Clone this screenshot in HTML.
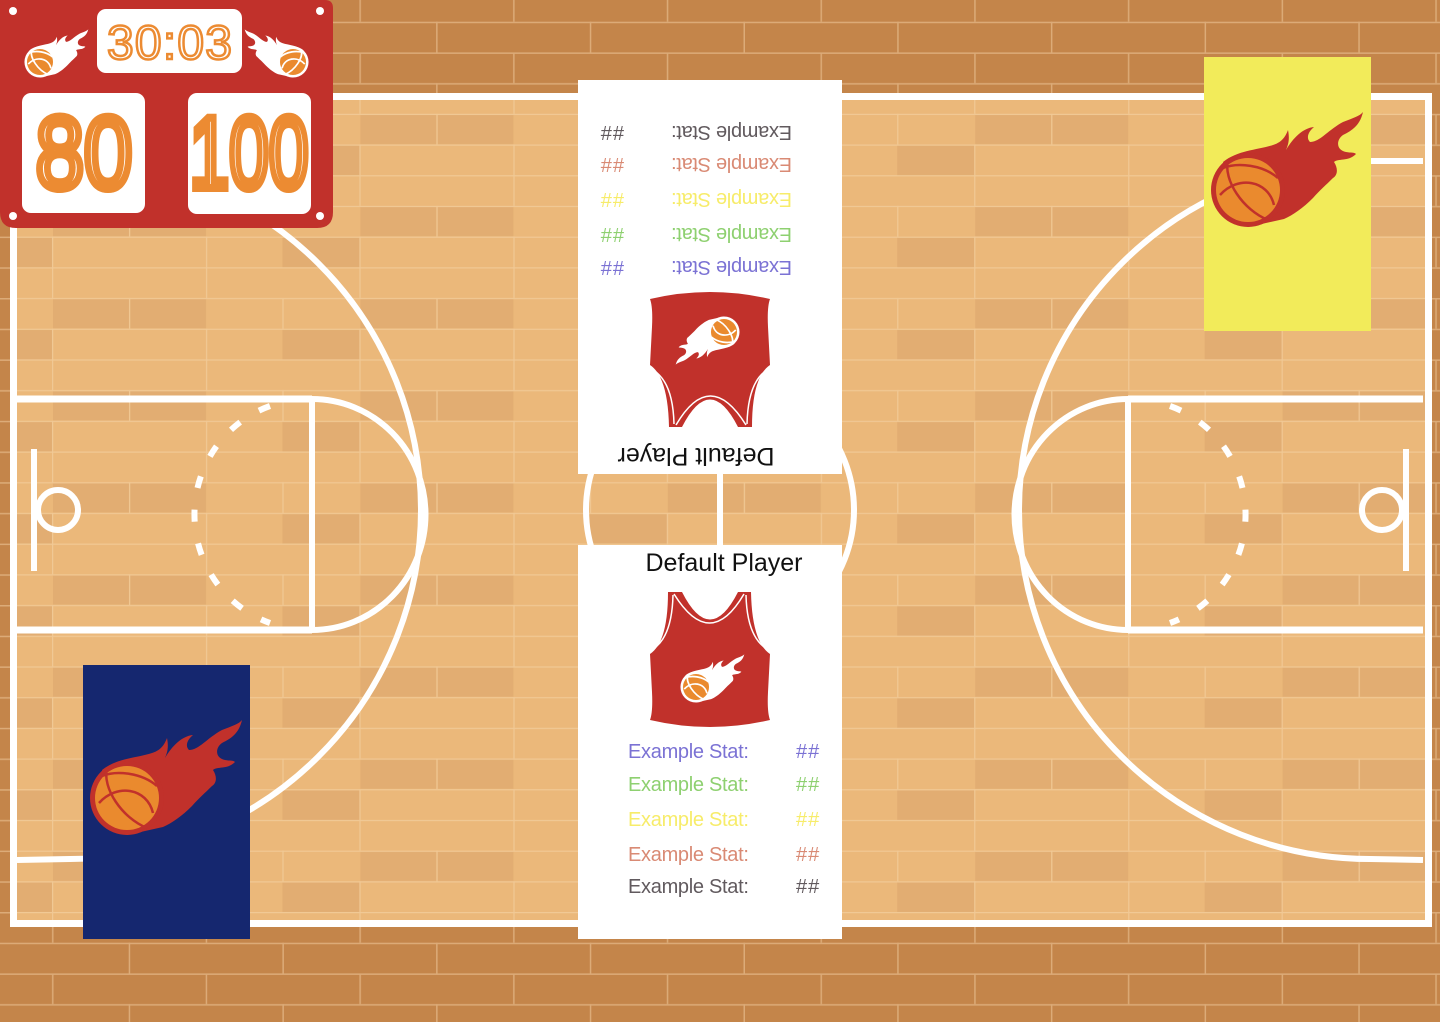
<!DOCTYPE html>
<html><head><meta charset="utf-8"><style>
html,body{margin:0;padding:0;width:1440px;height:1036px;overflow:hidden;background:#fff}
.abs{position:absolute}
.card{position:absolute;left:578px;width:264px;height:394px;background:#fff;font-family:"Liberation Sans",sans-serif}
.card .name{position:absolute;left:0;width:292px;text-align:center;top:4px;font-size:25px;color:#111}
.card .row{position:absolute;left:50px;font-size:20px;letter-spacing:-0.3px}
.card .num{position:absolute;left:218px;font-size:20px;letter-spacing:1px}
</style></head><body>
<svg class="abs" style="left:0;top:0" width="1440" height="1036" viewBox="0 0 1440 1036">
<defs>
<pattern id="dark" width="153.7" height="61.4" patternUnits="userSpaceOnUse" x="-25" y="-9">
<rect width="153.7" height="61.4" fill="#c4854a"/>
<rect y="0" width="153.7" height="1.5" fill="#dcab78"/>
<rect y="30.7" width="153.7" height="1.5" fill="#dcab78"/>
<rect x="77" y="0" width="1.5" height="30.7" fill="#dcab78"/>
<rect x="0" y="30.7" width="1.5" height="30.7" fill="#dcab78"/>
</pattern>
<pattern id="light" width="307.4" height="92.1" patternUnits="userSpaceOnUse" x="-25" y="-9">
<rect width="307.4" height="92.1" fill="#ebb87a"/>
<rect x="78" y="31" width="153" height="30" fill="#e2ad72"/>
<rect x="0" y="62" width="77" height="30" fill="#e2ad72"/>
<rect y="0" width="307.4" height="1.2" fill="#f1c995"/>
<rect y="30.7" width="307.4" height="1.2" fill="#f1c995"/>
<rect y="61.4" width="307.4" height="1.2" fill="#f1c995"/>
<rect x="77" y="0" width="1.2" height="30.7" fill="#f1c995"/>
<rect x="231" y="0" width="1.2" height="30.7" fill="#f1c995"/>
<rect x="0" y="30.7" width="1.2" height="30.7" fill="#f1c995"/>
<rect x="154" y="30.7" width="1.2" height="30.7" fill="#f1c995"/>
<rect x="77" y="61.4" width="1.2" height="30.7" fill="#f1c995"/>
<rect x="231" y="61.4" width="1.2" height="30.7" fill="#f1c995"/>
</pattern>
<g id="flame">
<path d="M -25,-28 C -10,-40 10,-40 25,-45 C 35,-48 38,-55 40,-60 C 42,-50 40,-45 38,-40 C 45,-52 55,-62 66,-63 C 60,-58 58,-52 62,-48 C 72,-48 80,-60 95,-68 C 105,-72 112,-74 115,-78 C 112,-65 105,-60 95,-55 C 88,-50 88,-40 98,-38 C 103,-37 106,-38 108,-36 C 100,-28 90,-32 86,-28 C 90,-22 90,-15 85,-12 C 78,-5 72,0 65,8 C 55,18 45,25 36,29 L 0,37 Z"/>
<circle r="37"/>
</g>
<g id="half">
<line x1="17" y1="399" x2="312" y2="399" stroke="#fff" stroke-width="7"/>
<line x1="17" y1="630" x2="312" y2="630" stroke="#fff" stroke-width="7"/>
<line x1="312" y1="399" x2="312" y2="630" stroke="#fff" stroke-width="6"/>
<path d="M312,399 A113,115 0 0 1 312,630" fill="none" stroke="#fff" stroke-width="6"/>
<path d="M270,406 A113,115 0 0 0 270,623" fill="none" stroke="#fff" stroke-width="6" stroke-dasharray="12,22"/>
<line x1="34" y1="449" x2="34" y2="571" stroke="#fff" stroke-width="6"/>
<circle cx="58" cy="510" r="20" fill="none" stroke="#fff" stroke-width="6"/>
<path d="M17,161 L70,161 A351,349 0 0 1 70,859 L17,860" fill="none" stroke="#fff" stroke-width="6"/>
</g>
</defs>
<rect width="1440" height="1022" fill="url(#dark)"/>
<rect x="10" y="93" width="1422" height="834" fill="url(#light)"/>
<rect x="13.5" y="96.5" width="1415" height="827" fill="none" stroke="#fff" stroke-width="7"/>
<use href="#half"/>
<use href="#half" transform="translate(1440,0) scale(-1,1)"/>
<line x1="720" y1="100" x2="720" y2="920" stroke="#fff" stroke-width="6"/>
<circle cx="720" cy="510" r="134" fill="none" stroke="#fff" stroke-width="6"/>

<rect x="1204" y="57" width="167" height="274" fill="#f2eb5a"/>
<g transform="translate(1248,190)"><use href="#flame" fill="#c1312b"/><circle r="32" fill="#ea8a2e"/>
<path d="M-25,-22 C-10,-28 15,-25 30,-12 M-28,5 C-10,-15 20,-10 26,15 M-20,-30 C-25,-10 -5,20 20,30 M-18,-30 L-10,-34" fill="none" stroke="#c1312b" stroke-width="2.5"/></g>
<rect x="83" y="665" width="167" height="274" fill="#15276f"/>
<g transform="translate(127,798)"><use href="#flame" fill="#c1312b"/><circle r="32" fill="#ea8a2e"/>
<path d="M-25,-22 C-10,-28 15,-25 30,-12 M-28,5 C-10,-15 20,-10 26,15 M-20,-30 C-25,-10 -5,20 20,30 M-18,-30 L-10,-34" fill="none" stroke="#c1312b" stroke-width="2.5"/></g>

<path d="M0,0 H325 Q333,0 333,8 V212 Q333,228 317,228 H16 Q0,228 0,212 Z" fill="#c1312b"/>
<circle cx="13" cy="11" r="4" fill="#fff"/><circle cx="320" cy="11" r="4" fill="#fff"/>
<circle cx="13" cy="216" r="4" fill="#fff"/><circle cx="320" cy="216" r="4" fill="#fff"/>
<rect x="97" y="9" width="145" height="64" rx="9" fill="#fff"/>
<rect x="22" y="93" width="123" height="120" rx="9" fill="#fff"/>
<rect x="188" y="93" width="123" height="121" rx="9" fill="#fff"/>
<g transform="translate(40,62) scale(0.42)"><use href="#flame" fill="#fff"/><circle r="31" fill="#ea8a2e"/>
<path d="M-25,-22 C-10,-28 15,-25 30,-12 M-28,5 C-10,-15 20,-10 26,15 M-20,-30 C-25,-10 -5,20 20,30" fill="none" stroke="#fff" stroke-width="4"/></g>
<g transform="translate(293,62) scale(-0.42,0.42)"><use href="#flame" fill="#fff"/><circle r="31" fill="#ea8a2e"/>
<path d="M-25,-22 C-10,-28 15,-25 30,-12 M-28,5 C-10,-15 20,-10 26,15 M-20,-30 C-25,-10 -5,20 20,30" fill="none" stroke="#fff" stroke-width="4"/></g>
<text x="107" y="59" font-family="Liberation Sans, sans-serif" font-size="48" fill="none" stroke="#ec8b32" stroke-width="2.5" textLength="125" lengthAdjust="spacing">30:03</text>
<text x="84" y="188" text-anchor="middle" font-family="Liberation Sans, sans-serif" font-size="102" fill="none" stroke="#ec8b32" stroke-width="8" transform="translate(84,0) scale(0.85,1) translate(-84,0)">80</text>
<text x="249" y="188" text-anchor="middle" font-family="Liberation Sans, sans-serif" font-size="102" fill="none" stroke="#ec8b32" stroke-width="8" transform="translate(249,0) scale(0.7,1) translate(-249,0)">100</text>
</svg>

<div class="card" style="top:545px">
<div class="name">Default Player</div>
<svg class="abs" style="left:72px;top:47px" width="120" height="140" viewBox="0 0 120 140">
<path d="M18,0 L32,0 Q60,55 88,0 L101,0 Q102,50 120,62 L118,100 Q117,120 120,128 Q60,142 0,128 Q3,120 2,100 L0,62 Q18,50 18,0Z" fill="#c1312b"/>
<path d="M24,2 Q60,60 94,2 M3,57 Q22,45 23,3 M117,57 Q97,45 96,3" fill="none" stroke="#fff" stroke-width="1.5"/>
<g transform="translate(46,95) scale(0.42)"><use href="#flame" fill="#fff"/><circle r="31" fill="#ea8a2e"/>
<path d="M-25,-22 C-10,-28 15,-25 30,-12 M-28,5 C-10,-15 20,-10 26,15 M-20,-30 C-25,-10 -5,20 20,30" fill="none" stroke="#fff" stroke-width="4"/></g>
</svg>
<div class="row" style="top:196px;color:#7b72d4">Example Stat:</div><div class="num" style="top:196px;color:#7b72d4">##</div>
<div class="row" style="top:229px;color:#8ed070">Example Stat:</div><div class="num" style="top:229px;color:#8ed070">##</div>
<div class="row" style="top:264px;color:#f7ec6a">Example Stat:</div><div class="num" style="top:264px;color:#f7ec6a">##</div>
<div class="row" style="top:299px;color:#d98a74">Example Stat:</div><div class="num" style="top:299px;color:#d98a74">##</div>
<div class="row" style="top:331px;color:#615a5e">Example Stat:</div><div class="num" style="top:331px;color:#615a5e">##</div>
</div>

<div class="card" style="top:80px;transform:rotate(180deg)">
<div class="name">Default Player</div>
<svg class="abs" style="left:72px;top:47px" width="120" height="140" viewBox="0 0 120 140">
<path d="M18,0 L32,0 Q60,55 88,0 L101,0 Q102,50 120,62 L118,100 Q117,120 120,128 Q60,142 0,128 Q3,120 2,100 L0,62 Q18,50 18,0Z" fill="#c1312b"/>
<path d="M24,2 Q60,60 94,2 M3,57 Q22,45 23,3 M117,57 Q97,45 96,3" fill="none" stroke="#fff" stroke-width="1.5"/>
<g transform="translate(46,95) scale(0.42)"><use href="#flame" fill="#fff"/><circle r="31" fill="#ea8a2e"/>
<path d="M-25,-22 C-10,-28 15,-25 30,-12 M-28,5 C-10,-15 20,-10 26,15 M-20,-30 C-25,-10 -5,20 20,30" fill="none" stroke="#fff" stroke-width="4"/></g>
</svg>
<div class="row" style="top:196px;color:#7b72d4">Example Stat:</div><div class="num" style="top:196px;color:#7b72d4">##</div>
<div class="row" style="top:229px;color:#8ed070">Example Stat:</div><div class="num" style="top:229px;color:#8ed070">##</div>
<div class="row" style="top:264px;color:#f7ec6a">Example Stat:</div><div class="num" style="top:264px;color:#f7ec6a">##</div>
<div class="row" style="top:299px;color:#d98a74">Example Stat:</div><div class="num" style="top:299px;color:#d98a74">##</div>
<div class="row" style="top:331px;color:#615a5e">Example Stat:</div><div class="num" style="top:331px;color:#615a5e">##</div>
</div>
</body></html>
